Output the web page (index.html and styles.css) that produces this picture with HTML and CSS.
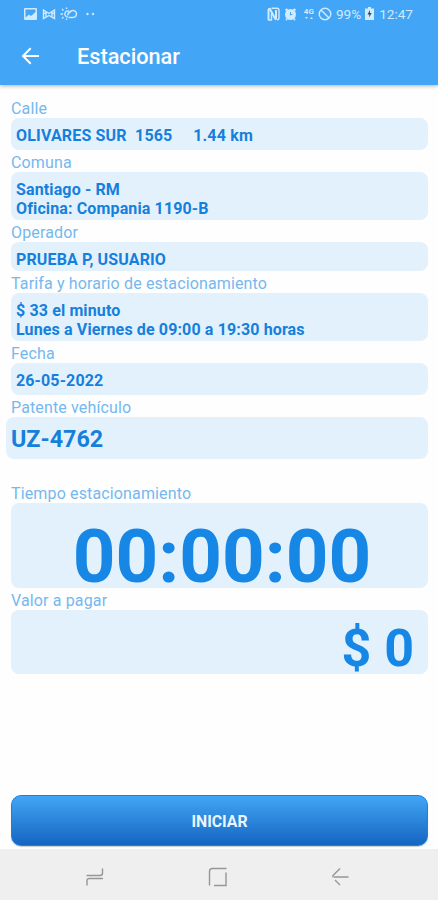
FILE: index.html
```html
<!DOCTYPE html>
<html lang="es">
<head>
  <meta charset="UTF-8">
  <meta name="viewport" content="width=device-width, initial-scale=1.0">
  <title>Estacionar</title>
  <link rel="stylesheet" href="styles.css">
</head>
<body>
  <header class="header">
    <div class="status">
      <svg class="status-left" width="76" height="16" viewBox="0 0 76 16">
        <path fill="currentColor" fill-rule="evenodd" d="M2 2h11q1 0 1 1v10q0 1-1 1H2q-1 0-1-1V3q0-1 1-1zM2.500 3.500v8L6 8.500l2 1.500 4.500-4V3.500z"/>
        <path class="line" d="M20.500 12.500V4l5.500 3.500L31.500 4v8.500L26 9.500zM23 5.500v5.500M29 5.500v5.500M20.500 8l3-2M31.500 8l-3-2"/>
        <path class="line" d="M45.500 11.500h4.500a3.500 3.500 0 1 0-3.200-5Q44.500 7 44.800 9.500M46.500 5.500a3 3 0 1 0-1.500 5.500M43.500 3V1.500M40.500 4.500l-1.500-1.500M40 8h-2.500M40.500 11l-1.500 1.500M43.500 12.500v1.500"/>
        <circle fill="currentColor" cx="64.500" cy="8" r="1.200"/>
        <circle fill="currentColor" cx="70" cy="8" r="1.200"/>
      </svg>
      <div class="status-right">
        <svg width="30" height="14" viewBox="0 0 30 14">
          <path class="line" d="M4.500 1.200H10q2 0 2 2v7.600q0 2-2 2"/>
          <path class="thick" d="M1.500 13V3q0-1.500 1.500-1l5 9.500q1 1.500 1-.5V3"/>
          <path class="line" d="M4.500 6.500V13H1"/>
          <circle fill="currentColor" cx="23.500" cy="7.500" r="5.500"/>
          <path class="thick" d="M18.500 3.500l2-1.500M28.500 3.500l-2-1.500M20 12l-1 1M27 12l1 1"/>
          <path class="dark" d="M23.500 5v3l2-1"/>
        </svg>
        <div class="net"><span>4G</span><svg width="8" height="4" viewBox="0 0 8 4"><path fill="currentColor" d="M0 1h3L1.500 3zM5 3h3L6.500 1z"/></svg></div>
        <svg width="14" height="14" viewBox="0 0 14 14">
          <circle class="ring" cx="7" cy="7" r="5.800"/>
          <path class="ring" d="M3 3l8 8"/>
        </svg>
        <span class="percent">99%</span>
        <svg class="battery" width="9" height="13" viewBox="0 0 9 13">
          <path fill="currentColor" d="M3 0h3v1.500h3V13H0V1.500h3z"/>
          <path fill="#31506b" d="M5 3L2.500 7.500h1.800L4 10.500l2.700-4.500H5z"/>
        </svg>
        <span class="clock">12:47</span>
      </div>
    </div>
    <div class="toolbar">
      <svg width="18" height="18" viewBox="0 0 18 18">
        <path class="back" d="M18 9H2M9.700 1.200L2 9l7.700 7.800"/>
      </svg>
      <h1>Estacionar</h1>
    </div>
  </header>

  <main class="content">
    <h2>Calle</h2>
    <div class="field"><p class="street">OLIVARES SUR&nbsp; 1565 &nbsp; &nbsp; 1.44 km</p></div>
    <h2>Comuna</h2>
    <div class="field double">
      <p>Santiago - RM</p>
      <p>Oficina: Compania 1190-B</p>
    </div>
    <h2>Operador</h2>
    <div class="field operator"><p>PRUEBA P, USUARIO</p></div>
    <h2>Tarifa y horario de estacionamiento</h2>
    <div class="field double">
      <p>$ 33 el minuto</p>
      <p>Lunes a Viernes de 09:00 a 19:30 horas</p>
    </div>
    <h2>Fecha</h2>
    <div class="field"><p>26-05-2022</p></div>
    <h2>Patente vehículo</h2>
    <div class="field plate">UZ-4762</div>
    <h2>Tiempo estacionamiento</h2>
    <div class="field timer">00:00:00</div>
    <h2>Valor a pagar</h2>
    <div class="field amount">$ 0</div>
    <button class="start">INICIAR</button>
  </main>

  <nav class="navbar">
    <svg width="20" height="20" viewBox="0 0 20 20"><path d="M1.500 8.500H15q2.500 0 2.500-2.500V1.500M18 11.500H4.500Q2 11.500 2 14v4.500"/></svg>
    <svg width="20" height="20" viewBox="0 0 20 20"><path d="M1.500 18.500V4.500q0-3 3-3H18.500M18 5.500v13H6"/></svg>
    <svg width="20" height="20" viewBox="0 0 20 20"><path d="M18.500 10H4M10 1.500L3 8.500v2M5 13l5 5"/></svg>
  </nav>
</body>
</html>
```
FILE: styles.css
```css
* { box-sizing: border-box; }
body { display: flex; flex-direction: column; height: 900px; margin: 0; overflow: hidden; background: #fefefe; font-family: Roboto, sans-serif; }
h1, h2, p { margin: 0; }
svg { display: block; flex: none; fill: none; }

.header { flex: none; height: 85px; background: #42a5f5; color: #fff; box-shadow: 0 1px 4px rgba(0,0,0,0.3); }
.status { display: flex; justify-content: space-between; align-items: center; height: 27px; padding: 0 25px 0 23px; color: #d0eaff; }
.status-right { display: flex; align-items: center; font-size: 13.6px; }
.line { stroke: currentColor; stroke-width: 1.4; }
.thick { stroke: currentColor; stroke-width: 2; }
.dark { stroke: #42a5f5; stroke-width: 1; }
.ring { stroke: currentColor; stroke-width: 1.4; }
.net { display: flex; flex-direction: column; align-items: center; width: 12px; margin: 0 3px 0 6px; font-size: 8px; line-height: 8px; font-weight: 700; }
.percent { margin-left: 4px; }
.battery { margin: 0 5px 0 4px; }

.toolbar { display: flex; align-items: center; height: 58px; padding-left: 21px; gap: 38px; }
.toolbar h1 { padding-top: 1px; font-size: 21.7px; font-weight: 500; line-height: 26px; }
.back { stroke: #fff; stroke-width: 2; }

.content { flex: 1; display: flex; flex-direction: column; padding: 11px 10px 3px 11px; }
.content h2 { height: 22px; padding-top: 3px; color: #75b8ef; font-size: 16px; font-weight: 400; line-height: 19px; letter-spacing: 0.14px; }
.field { height: 32px; padding: 8px 5px 0; border-radius: 8px; background: #e3f1fd; color: #1580dc; font-size: 16px; font-weight: 700; line-height: 19px; letter-spacing: 0.13px; white-space: nowrap; }
.street { letter-spacing: 0.17px; }
.double { height: 48px; }
.operator { height: 29px; }
.plate { height: 42px; margin: 0 0 22px -5px; padding: 0 5px; font-size: 23.3px; line-height: 44px; letter-spacing: 0; }
.timer { height: 85px; padding: 23px 0 0 5px; color: #1787e6; font-size: 74.5px; line-height: 62px; letter-spacing: 0; text-align: center; }
.amount { height: 64px; padding: 14px 14px 0; color: #1787e6; font-size: 52px; line-height: 50px; letter-spacing: 0; text-align: right; }

.start { height: 51px; margin-top: auto; padding: 1px 0 0; border: 1px solid #1e7fdc; border-radius: 10px; background: linear-gradient(#42a5f5, #1565c0); color: #e9f5ff; font-family: inherit; font-size: 15.800px; font-weight: 700; box-shadow: 0 1px 1px rgba(0,0,0,0.2); }

.navbar { flex: none; display: flex; justify-content: space-between; align-items: center; height: 51px; padding: 4px 88px 0 85px; background: #efefef; }
.navbar path { stroke: #969696; stroke-width: 1.4; }
```
